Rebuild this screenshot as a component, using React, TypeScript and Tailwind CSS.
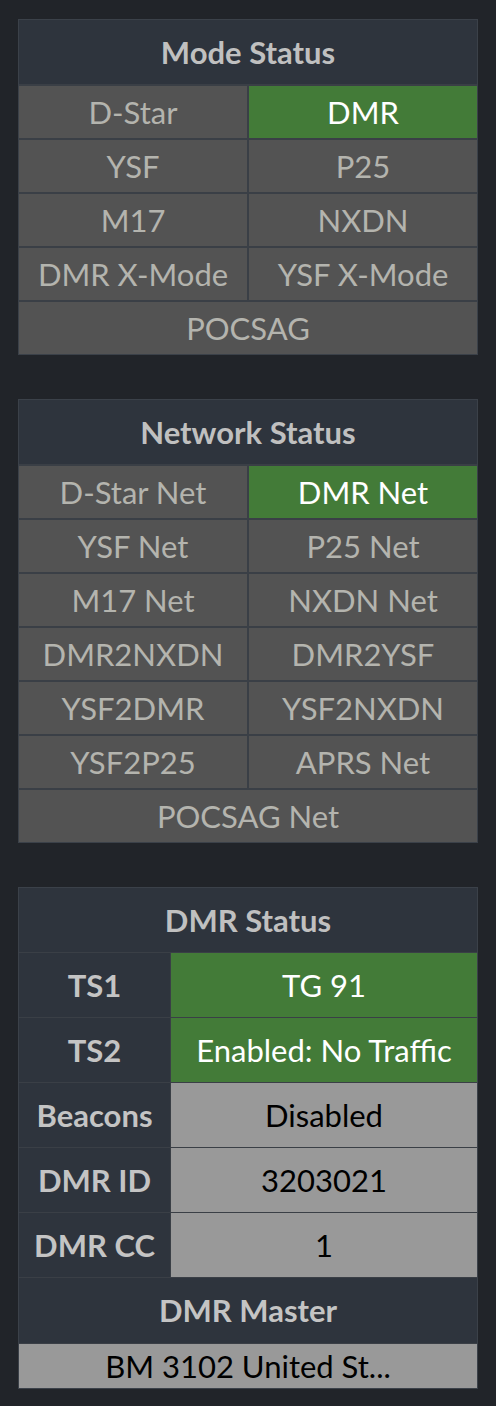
import React from "react";

const font = { fontFamily: "Lato, 'Noto Sans', sans-serif" };

function Cell({ label, active, full }: { label: string; active?: boolean; full?: boolean }) {
  return (
    <div
      className={`${full ? "col-span-2" : ""} h-[52px] flex items-center justify-center text-[31px] leading-none ${
        active ? "bg-[#437b38] text-white" : "bg-[#535353] text-[#b4b4ae]"
      }`}
    >
      {label}
    </div>
  );
}

function Header({ title }: { title: string }) {
  return (
    <div className="col-span-2 h-[64px] flex items-center justify-center bg-[#2e343d] text-[31px] font-bold text-[#c0c0c0] leading-none">
      {title}
    </div>
  );
}

function GridPanel({ title, items }: { title: string; items: { l: string; a?: boolean; f?: boolean }[] }) {
  return (
    <div className="border border-[#3b4149] bg-[#3a3f46] grid grid-cols-2 gap-[2px]">
      <Header title={title} />
      {items.map((it) => (
        <Cell key={it.l} label={it.l} active={it.a} full={it.f} />
      ))}
    </div>
  );
}

function DmrRow({ label, value, green }: { label: string; value: string; green?: boolean }) {
  return (
    <>
      <div className="h-[64px] flex items-center justify-center bg-[#2e343d] text-[31px] font-bold text-[#c4c4c4] leading-none">
        {label}
      </div>
      <div
        className={`h-[64px] flex items-center justify-center text-[31px] leading-none ${
          green ? "bg-[#437b38] text-white" : "bg-[#999999] text-black"
        }`}
      >
        {value}
      </div>
    </>
  );
}

export default function App() {
  return (
    <div className="min-h-[1406px] w-[496px] bg-[#212429] px-[18px] pt-[19px]" style={font}>
      <GridPanel
        title="Mode Status"
        items={[
          { l: "D-Star" },
          { l: "DMR", a: true },
          { l: "YSF" },
          { l: "P25" },
          { l: "M17" },
          { l: "NXDN" },
          { l: "DMR X-Mode" },
          { l: "YSF X-Mode" },
          { l: "POCSAG", f: true },
        ]}
      />
      <div className="h-[44px]" />
      <GridPanel
        title="Network Status"
        items={[
          { l: "D-Star Net" },
          { l: "DMR Net", a: true },
          { l: "YSF Net" },
          { l: "P25 Net" },
          { l: "M17 Net" },
          { l: "NXDN Net" },
          { l: "DMR2NXDN" },
          { l: "DMR2YSF" },
          { l: "YSF2DMR" },
          { l: "YSF2NXDN" },
          { l: "YSF2P25" },
          { l: "APRS Net" },
          { l: "POCSAG Net", f: true },
        ]}
      />
      <div className="h-[44px]" />
      <div className="border border-[#3b4149] bg-[#3a3f46] grid grid-cols-[151px_1fr] gap-px">
        <div className="col-span-2 h-[64px] flex items-center justify-center bg-[#2e343d] text-[31px] font-bold text-[#c0c0c0] leading-none">
          DMR Status
        </div>
        <DmrRow label="TS1" value="TG 91" green />
        <DmrRow label="TS2" value="Enabled: No Traffic" green />
        <DmrRow label="Beacons" value="Disabled" />
        <DmrRow label="DMR ID" value="3203021" />
        <DmrRow label="DMR CC" value="1" />
        <div className="col-span-2 h-[65px] flex items-center justify-center bg-[#2e343d] text-[31px] font-bold text-[#c4c4c4] leading-none">
          DMR Master
        </div>
        <div className="col-span-2 h-[44px] flex items-center justify-center bg-[#999999] text-black text-[31px] leading-none">
          BM 3102 United St...
        </div>
      </div>
    </div>
  );
}
